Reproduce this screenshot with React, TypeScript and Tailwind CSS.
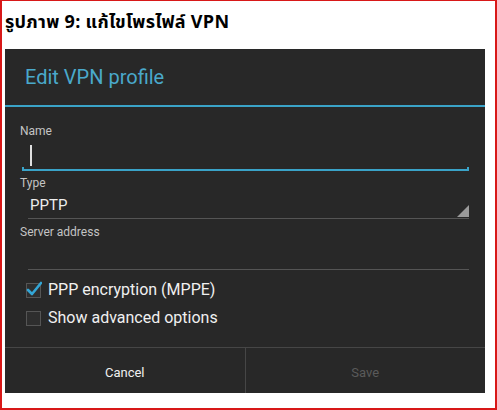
import React from "react";

export default function App() {
  return (
    <div className="w-[497px] h-[410px] bg-white border-t border-l-2 border-r-2 border-b-2 border-[#d81818] box-border overflow-hidden">
      <div className="pl-[3px] pt-[11px] h-[48px] font-bold text-[18px] leading-[22px] tracking-[0.3px] text-black" style={{ fontFamily: '"Noto Sans Thai", Tahoma, "DejaVu Sans", "Noto Sans", sans-serif' }}>
        รูปภาพ 9: แก้ไขโพรไฟล์ VPN
      </div>
      <div className="ml-[3px] w-[480px] h-[344px] bg-[#282828] flex flex-col" style={{ fontFamily: 'Roboto, "Noto Sans", sans-serif' }}>
        <div className="h-[56px] flex items-center pl-5 text-[20px] text-[#4aa9cb]">Edit VPN profile</div>
        <div className="h-[2px] bg-[#3aa3c8]" />
        <div className="pl-[15px] pr-[16px] flex flex-col">
          <div className="h-[16px] mt-[16px] text-[12px] leading-[16px] text-[#c4c4c4]">Name</div>
          <div className="relative h-[30px] ml-[3px]">
            <div className="absolute left-[7px] top-[6px] w-[1.5px] h-[21px] bg-[#e0e0e0]" />
          </div>
          <div className="relative ml-[2px] h-[2px] bg-[#3aa3c8]">
            <div className="absolute left-0 bottom-0 w-[2px] h-[4px] bg-[#3aa3c8]" />
            <div className="absolute right-0 bottom-0 w-[2px] h-[4px] bg-[#3aa3c8]" />
          </div>
          <div className="h-[16px] mt-[4px] text-[12px] leading-[16px] text-[#c4c4c4]">Type</div>
          <div className="relative h-[26px] mt-[1px] ml-[8px] text-[15px] leading-[26px] text-[#eeeeee] pl-[2px]">
            PPTP
            <svg className="absolute right-0 bottom-[1px]" width="12" height="12" viewBox="0 0 12 12">
              <polygon points="12,0 12,12 0,12" fill="#9a9a9a" />
            </svg>
          </div>
          <div className="ml-[8px] h-[1px] bg-[#555555]" />
          <div className="h-[16px] mt-[5px] text-[12px] leading-[16px] text-[#c4c4c4]">Server address</div>
          <div className="h-[29px]" />
          <div className="ml-[8px] h-[1px] bg-[#555555]" />
          <div className="flex items-center h-[20px] mt-[10px] ml-[6px]">
            <div className="w-[15px] h-[15px] border border-[#555] bg-[#2e2e2e] relative">
              <svg className="absolute -left-[1px] -top-[3px]" width="16" height="16" viewBox="0 0 16 16">
                <path d="M2 9 L6 13 L15 2" fill="none" stroke="#33a6d6" strokeWidth="2.6" strokeLinecap="round" strokeLinejoin="round" />
              </svg>
            </div>
            <span className="ml-[7px] text-[16px] text-[#f0f0f0]">PPP encryption (MPPE)</span>
          </div>
          <div className="flex items-center h-[20px] mt-[8px] ml-[6px]">
            <div className="w-[15px] h-[15px] border border-[#555] bg-[#2e2e2e]" />
            <span className="ml-[7px] text-[16px] text-[#f0f0f0]">Show advanced options</span>
          </div>
        </div>
        <div className="mt-auto h-[46px] border-t border-[#464646] flex">
          <div className="flex-1 flex items-center justify-center pt-[4px] text-[13px] text-[#f0f0f0] border-r border-[#464646]">Cancel</div>
          <div className="flex-1 flex items-center justify-center pt-[4px] text-[13px] text-[#5a5a5a]">Save</div>
        </div>
      </div>
    </div>
  );
}
